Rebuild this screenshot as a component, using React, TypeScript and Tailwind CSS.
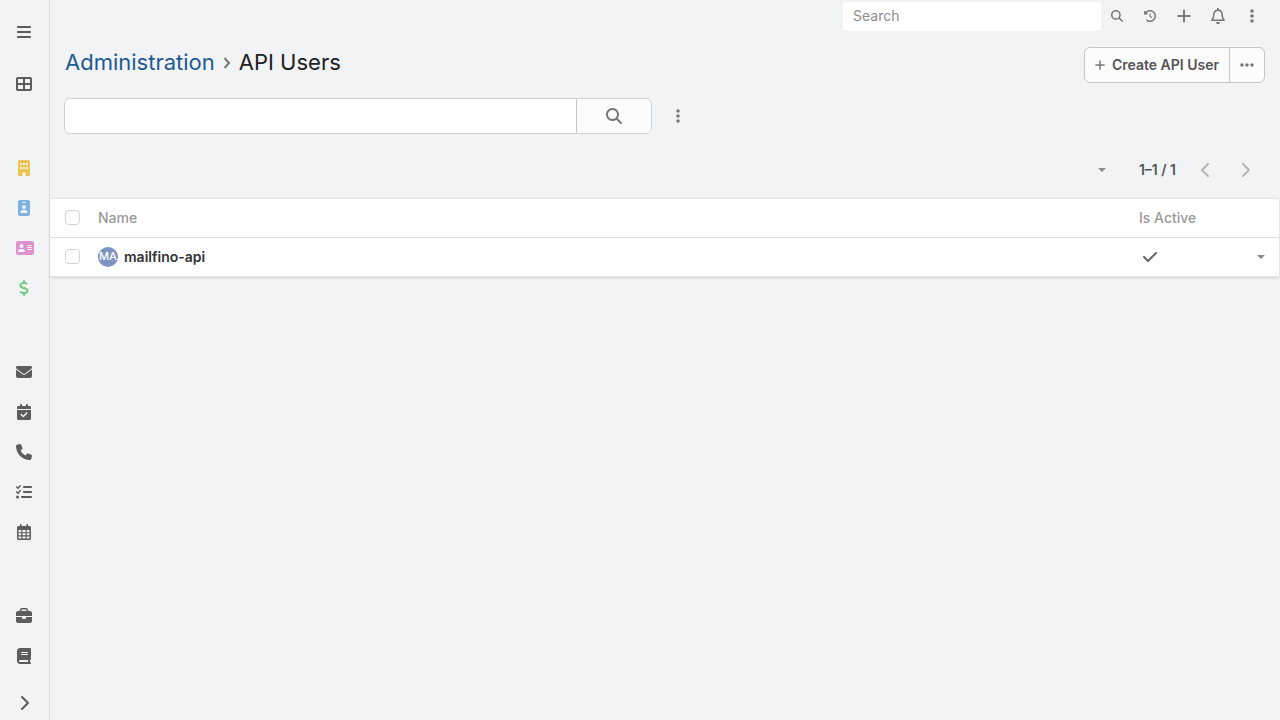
import type { IconType } from "react-icons";
import {
  FaAddressCard,
  FaBars,
  FaBook,
  FaBriefcase,
  FaBuilding,
  FaCalendarCheck,
  FaCheck,
  FaChevronLeft,
  FaChevronRight,
  FaClockRotateLeft,
  FaDollarSign,
  FaEllipsis,
  FaEllipsisVertical,
  FaEnvelope,
  FaIdBadge,
  FaListCheck,
  FaMagnifyingGlass,
  FaPhone,
  FaPlus,
  FaRegBell,
  FaTableCellsLarge,
} from "react-icons/fa6";

type NavItem = {
  label: string;
  icon: IconType | typeof CalendarGrid;
  color: string;
  size?: number;
};

function CalendarGrid({ size = 16 }: { size?: number }) {
  return (
    <svg width={size} height={size} viewBox="0 0 16 16" fill="currentColor">
      <path
        fillRule="evenodd"
        d="M4 .8a.8.8 0 0 1 1.600 0V2h4.800V.8a.8.8 0 0 1 1.600 0V2h1.500A1.500 1.500 0 0 1 15 3.500v11a1.500 1.500 0 0 1-1.500 1.500h-11A1.500 1.500 0 0 1 1 14.500v-11A1.500 1.500 0 0 1 2.500 2H4z
        M2.500 6v2.200h2.800V6z M6.500 6v2.200h3V6z M10.700 6v2.200h2.800V6z
        M2.500 9.300v2h2.800v-2z M6.500 9.300v2h3v-2z M10.700 9.300v2h2.800v-2z
        M2.500 12.400v2.100h2.800v-2.100z M6.500 12.400v2.100h3v-2.100z M10.700 12.400v2.100h2.800v-2.100z"
      />
    </svg>
  );
}

const navGroups: NavItem[][] = [
  [{ label: "Home", icon: FaTableCellsLarge, color: "text-[#5c5c5c]" }],
  [
    { label: "Accounts", icon: FaBuilding, color: "text-[#edc555]" },
    { label: "Contacts", icon: FaIdBadge, color: "text-[#7eb1df]" },
    { label: "Leads", icon: FaAddressCard, color: "text-[#dc92cc]", size: 18 },
    { label: "Opportunities", icon: FaDollarSign, color: "text-[#6fcb80]" },
  ],
  [
    { label: "Emails", icon: FaEnvelope, color: "text-[#5c5c5c]" },
    { label: "Meetings", icon: FaCalendarCheck, color: "text-[#5c5c5c]" },
    { label: "Calls", icon: FaPhone, color: "text-[#5c5c5c]" },
    { label: "Tasks", icon: FaListCheck, color: "text-[#5c5c5c]" },
    { label: "Calendar", icon: CalendarGrid, color: "text-[#5c5c5c]" },
  ],
  [
    { label: "Cases", icon: FaBriefcase, color: "text-[#5c5c5c]" },
    { label: "Knowledge Base", icon: FaBook, color: "text-[#5c5c5c]" },
  ],
];

const users = [{ name: "mailfino-api", initials: "MA", active: true }];

function Caret() {
  return (
    <svg width="8" height="4" viewBox="0 0 8 4" fill="currentColor">
      <path d="M0 0h8L4 4z" />
    </svg>
  );
}

function Checkbox({ label }: { label: string }) {
  return (
    <input
      type="checkbox"
      aria-label={label}
      className="block size-[15px] appearance-none rounded-sm border border-[#d0d3d6] bg-white checked:bg-[#7c93c3]"
    />
  );
}

function Sidebar() {
  return (
    <nav className="flex w-[50px] shrink-0 flex-col border-r border-[#dcdfe2]">
      <button
        aria-label="Menu"
        className="flex h-16 items-center pl-4 text-[#5c5c5c]"
      >
        <FaBars size={16} />
      </button>
      <div className="flex flex-col gap-11">
        {navGroups.map((group, i) => (
          <ul key={i}>
            {group.map(({ label, icon: Icon, color, size = 16 }) => (
              <li key={label}>
                <a
                  href="#"
                  aria-label={label}
                  className={`flex h-10 items-center pl-4 ${color}`}
                >
                  <Icon size={size} />
                </a>
              </li>
            ))}
          </ul>
        ))}
      </div>
      <button
        aria-label="Expand"
        className="mt-auto flex h-[34px] items-center pl-4 text-[#5c5c5c]"
      >
        <FaChevronRight size={16} />
      </button>
    </nav>
  );
}

function TopBar() {
  return (
    <div className="flex items-start justify-end pr-[11px] text-[#777]">
      <input
        type="text"
        aria-label="Search"
        placeholder="Search"
        className="mt-0.5 h-[29px] w-[258px] rounded-b bg-white px-2.5 pb-0.5 text-sm placeholder:text-[#8c8c8c]"
      />
      <button aria-label="Run search" className="flex h-[31px] w-8 items-center justify-center">
        <FaMagnifyingGlass size={12} />
      </button>
      <button aria-label="History" className="flex h-[31px] w-[34px] items-center justify-center">
        <FaClockRotateLeft size={12} />
      </button>
      <button aria-label="Create" className="flex h-[31px] w-[34px] items-center justify-center">
        <FaPlus size={16} />
      </button>
      <button
        aria-label="Notifications"
        className="flex h-[31px] w-[34px] items-center justify-center"
      >
        <FaRegBell size={16} />
      </button>
      <button aria-label="More" className="flex h-[31px] w-[34px] items-center justify-center">
        <FaEllipsisVertical size={16} />
      </button>
    </div>
  );
}

export default function App() {
  return (
    <div className="flex min-h-screen bg-[#f1f3f5] font-['Inter',sans-serif] text-sm text-[#333]">
      <Sidebar />
      <main className="min-w-0 flex-1">
        <TopBar />

        <header className="mt-4 flex justify-between px-[15px]">
          <h1 className="flex h-8 items-center gap-2 text-[22px] text-[#212121]">
            <a href="#" className="text-[#1f5a92]">
              Administration
            </a>
            <svg
              width="8"
              height="12"
              viewBox="0 0 8 12"
              fill="none"
              stroke="#777"
              strokeWidth="2"
            >
              <path d="M1.500 1l4.500 5-4.500 5" />
            </svg>
            API Users
          </h1>
          <div className="flex h-9 rounded-md border border-[#c0c6ca] bg-[#fcfcfc] font-semibold text-[#555]">
            <button className="flex items-center gap-1.5 pr-2.5 pl-[9px]">
              <FaPlus size={12} className="text-[#777]" />
              Create API User
            </button>
            <button
              aria-label="More actions"
              className="flex w-[35px] items-center justify-center border-l border-[#c0c6ca] text-[#777]"
            >
              <FaEllipsis size={16} />
            </button>
          </div>
        </header>

        <div className="mt-[15px] flex items-center pl-3.5">
          <div className="flex h-9 w-[588px] rounded-md border border-[#cdd1d4] bg-white">
            <input
              type="text"
              aria-label="Filter users"
              className="min-w-0 flex-1 rounded-l-md px-3 outline-none"
            />
            <button
              aria-label="Search users"
              className="flex w-[75px] items-center justify-center rounded-r-md border-l border-[#c0c6ca] bg-[#fcfcfc] text-[#777]"
            >
              <FaMagnifyingGlass size={16} />
            </button>
          </div>
          <button
            aria-label="Search options"
            className="ml-2.5 flex h-9 w-8 items-center justify-center text-[#777]"
          >
            <FaEllipsisVertical size={16} />
          </button>
        </div>

        <div className="flex h-16 items-center justify-end pt-2 pr-4 text-[#555]">
          <button
            aria-label="List options"
            className="mr-[33px] flex h-9 items-center text-[#888]"
          >
            <Caret />
          </button>
          <span className="font-semibold">1–1 / 1</span>
          <button
            aria-label="Previous page"
            className="ml-2.5 flex h-9 w-10 items-center justify-center text-[#b5b5b5]"
          >
            <FaChevronLeft size={16} />
          </button>
          <button
            aria-label="Next page"
            className="flex h-9 w-[38px] items-center justify-center text-[#b5b5b5]"
          >
            <FaChevronRight size={16} />
          </button>
        </div>

        <div className="border-y border-r border-[#e3e6e9] bg-white shadow-sm">
          <table className="w-full table-fixed text-left">
            <thead>
              <tr className="h-[38px] border-b border-[#dcdfe2] text-[#999]">
                <th className="w-12 pl-[15px]">
                  <Checkbox label="Select all" />
                </th>
                <th className="font-medium">Name</th>
                <th className="w-[100px] font-medium">Is Active</th>
                <th className="w-10" />
              </tr>
            </thead>
            <tbody>
              {users.map((user) => (
                <tr key={user.name} className="h-[39px]">
                  <td className="pl-[15px]">
                    <Checkbox label={`Select ${user.name}`} />
                  </td>
                  <td>
                    <a href="#" className="flex items-center gap-1.5 font-semibold text-[#333]">
                      <span className="flex size-5 items-center justify-center rounded-full bg-[#7c93c3] text-[11px] font-medium text-white">
                        {user.initials}
                      </span>
                      {user.name}
                    </a>
                  </td>
                  <td className="pl-[3px] text-[#666]">{user.active && <FaCheck size={16} />}</td>
                  <td>
                    <button
                      aria-label={`Actions for ${user.name}`}
                      className="ml-auto flex h-6 items-center pr-3.5 text-[#888]"
                    >
                      <Caret />
                    </button>
                  </td>
                </tr>
              ))}
            </tbody>
          </table>
        </div>
      </main>
    </div>
  );
}
